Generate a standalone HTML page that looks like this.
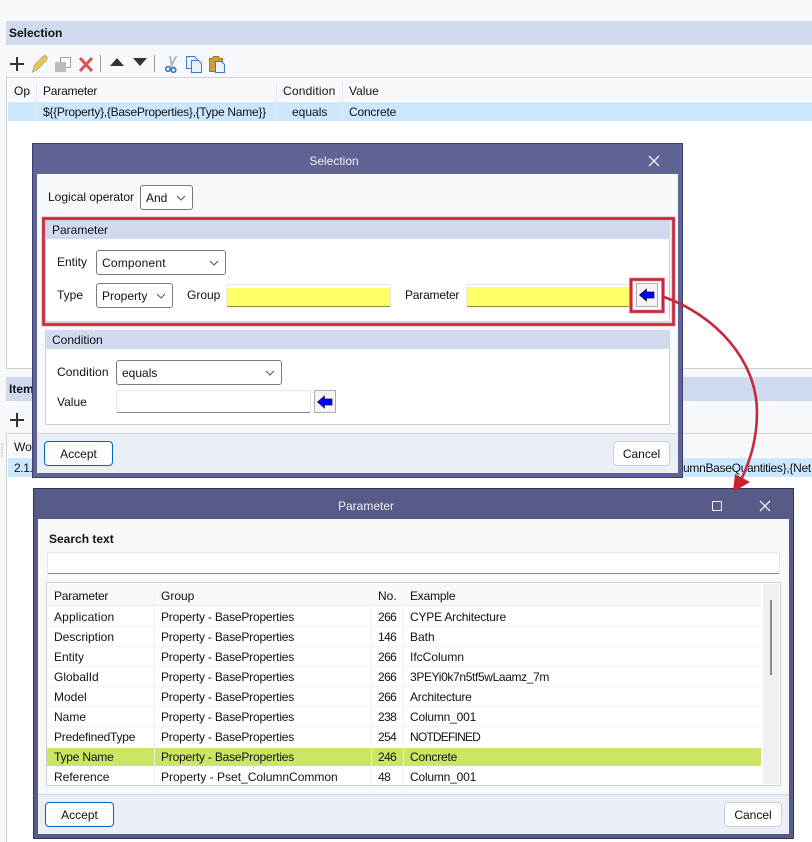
<!DOCTYPE html>
<html><head><meta charset="utf-8">
<style>
html,body{margin:0;padding:0}
body{width:812px;height:842px;overflow:hidden;position:relative;background:#f7f8fc;font-family:"Liberation Sans",sans-serif;font-size:12px;color:#111}
.b{position:absolute;box-sizing:border-box}
.t{position:absolute;white-space:nowrap;line-height:16px;height:16px}
.c{text-align:center}
.p{letter-spacing:-.2px}
.h{letter-spacing:-.2px}
.n{letter-spacing:-.6px}
.w{letter-spacing:.2px}
.sel{position:absolute;box-sizing:border-box;background:#fff;border:1px solid #7a7a7a;border-radius:3px;line-height:25px;padding-left:5px}
.sel svg{position:absolute;right:6px;top:9px}
.inp{position:absolute;box-sizing:border-box;background:#fff;border:1px solid #e6e6e6;border-bottom:1px solid #8a8a8a;border-radius:2px}
.btn{position:absolute;box-sizing:border-box;background:#fdfdfd;border:1px solid #d0d0d0;border-radius:4px;text-align:center;line-height:25px}
.acc{border:1px solid #0067c0}
.arr{position:absolute;box-sizing:border-box;background:#f5f5f5;border:1px solid #adadad}
.arr svg{position:absolute;left:2px;top:4px}
</style></head><body>

<!-- background main window -->
<div class="b" style="left:6px;top:21px;width:806px;height:24px;background:#cfdaef"></div>
<div class="t" style="left:9px;top:25px;font-weight:bold">Selection</div>

<svg class="b" style="left:0;top:45px" width="240" height="32" viewBox="0 45 240 32">
<path d="M17 57v14M10 64h14" stroke="#333" stroke-width="2" fill="none"/>
<path d="M32.500 72l2-7 9-9c1-1 3-.5 3.500 1s.5 2-.5 3l-9 9.500z" fill="#eec64e" stroke="#b9b08a" stroke-width="1"/>
<rect x="60.500" y="57.500" width="10" height="10" fill="#fff" stroke="#9a9a9a"/>
<rect x="55" y="62" width="11" height="10" fill="#bdbdbd"/>
<path d="M80 58l12 13M92 58l-12 13" stroke="#d9534f" stroke-width="3" fill="none"/>
<path d="M100.500 55v17M154.500 55v17" stroke="#9a9a9a" fill="none"/>
<path d="M117 58l7 8h-14z" fill="#333"/>
<path d="M133 58h14l-7 8z" fill="#333"/>
<path d="M176.500 56l-6 11M170 56l2 11" stroke="#9db0c6" stroke-width="1.600" fill="none"/>
<circle cx="168" cy="69" r="2.300" fill="none" stroke="#2f77bd" stroke-width="1.600"/>
<circle cx="173.500" cy="70" r="2.300" fill="none" stroke="#2f77bd" stroke-width="1.600"/>
<path d="M186.500 56.500h8l3 3v9h-11z" fill="#eaf2fb" stroke="#3a7bd0"/>
<path d="M191.500 60.500h7l3 3v9h-10z" fill="#eaf2fb" stroke="#3a7bd0"/>
<path d="M209.500 58.500h3l1-2h5l1 2h3v13h-13z" fill="#d39a44" stroke="#a8742a"/>
<path d="M215.500 61.500h6l3 3v8h-9z" fill="#eaf2fb" stroke="#3a7bd0"/>
</svg>

<div class="b" style="left:6px;top:77px;width:806px;height:292px;background:#fff;border:1px solid #d0d0d0;border-right:0"></div>
<div class="b" style="left:8px;top:79px;width:804px;height:22px;background:#f7f8fc"></div>
<div class="b" style="left:8px;top:102px;width:804px;height:19px;background:#cce8ff"></div>
<div class="b" style="left:36px;top:82px;width:1px;height:39px;background:#e6e9f0"></div>
<div class="b" style="left:276px;top:82px;width:1px;height:39px;background:#e6e9f0"></div>
<div class="b" style="left:342px;top:82px;width:1px;height:39px;background:#e6e9f0"></div>
<div class="t" style="left:14px;top:83px">Op</div>
<div class="t h" style="left:43px;top:83px">Parameter</div>
<div class="t w" style="left:283px;top:83px">Condition</div>
<div class="t" style="left:349px;top:83px">Value</div>
<div class="t" style="left:43px;top:104px;letter-spacing:-.27px">${{Property},{BaseProperties},{Type Name}}</div>
<div class="t" style="left:292px;top:104px">equals</div>
<div class="t h" style="left:349px;top:104px">Concrete</div>

<div class="b" style="left:6px;top:377px;width:806px;height:24px;background:#cfdaef"></div>
<div class="t" style="left:9px;top:381px;font-weight:bold">Item</div>
<svg class="b" style="left:0;top:401px" width="40" height="32"><path d="M17 12v14M10 19h14" stroke="#333" stroke-width="2" fill="none"/></svg>
<div class="b" style="left:6px;top:433px;width:806px;height:409px;background:#fff;border:1px solid #d0d0d0;border-right:0;border-bottom:0"></div>
<div class="b" style="left:8px;top:435px;width:804px;height:22px;background:#f7f8fc"></div>
<div class="b" style="left:8px;top:458px;width:804px;height:19px;background:#cce8ff"></div>
<div class="t" style="left:14px;top:439px">Wo</div>
<div class="t" style="left:14px;top:460px;letter-spacing:-.4px">2.1.</div>
<div class="t" style="left:683px;top:460px;width:129px;overflow:hidden;letter-spacing:-.3px">umnBaseQuantities},{Net</div>
<svg class="b" style="left:0;top:442px" width="5" height="16"><path d="M1 2h2M1 5h2M1 8h2M1 11h2M1 14h2" stroke="#b5b5b5" fill="none"/></svg>

<!-- Dialog 1 -->
<div class="b" style="left:32px;top:143px;width:651px;height:335px;background:#606494;border:1px solid #3b3d6e"></div>
<div class="b" style="left:37px;top:174px;width:641px;height:299px;background:#f7f8fc"></div>
<div class="t c" style="left:37px;top:153px;width:594px;color:#f0f0f5">Selection</div>
<svg class="b" style="left:648px;top:155px" width="12" height="12"><path d="M1 1l10 10M11 1l-10 10" stroke="#f2f2f6" stroke-width="1.300"/></svg>

<div class="t" style="left:48px;top:189px">Logical operator</div>
<div class="sel" style="left:140px;top:185px;width:53px;height:25px">And<svg width="10" height="6"><path d="M1 1l4 4 4-4" stroke="#555" fill="none"/></svg></div>

<!-- Parameter group -->
<div class="b" style="left:45px;top:219px;width:625px;height:103px;background:#fff;border:1px solid #d0d0d0"></div>
<div class="b" style="left:45px;top:220px;width:625px;height:19px;background:#cfdaef"></div>
<div class="t" style="left:52px;top:222px">Parameter</div>
<div class="t" style="left:57px;top:254px">Entity</div>
<div class="sel w" style="left:96px;top:250px;width:130px;height:25px">Component<svg width="10" height="6"><path d="M1 1l4 4 4-4" stroke="#555" fill="none"/></svg></div>
<div class="t" style="left:57px;top:287px">Type</div>
<div class="sel" style="left:96px;top:283px;width:77px;height:25px">Property<svg width="10" height="6"><path d="M1 1l4 4 4-4" stroke="#555" fill="none"/></svg></div>
<div class="t" style="left:187px;top:287px">Group</div>
<div class="inp" style="left:226px;top:284px;width:165px;height:23px;border-bottom:1px solid #8a8a3a;background:linear-gradient(#fff 0,#fff 3px,#ffff66 3px)"></div>
<div class="t h" style="left:405px;top:287px">Parameter</div>
<div class="inp" style="left:466px;top:284px;width:164px;height:23px;border-bottom:1px solid #8a8a3a;background:linear-gradient(#fff 0,#fff 2px,#ffff66 2px)"></div>
<div class="arr" style="left:636px;top:283px;width:22px;height:24px"><svg width="16" height="14"><path d="M.5 7L7.500 1V4H15V10H7.500V13Z" fill="#0000ff" stroke="#101040" stroke-width=".7"/></svg></div>

<!-- Condition group -->
<div class="b" style="left:45px;top:330px;width:625px;height:95px;background:#fff;border:1px solid #d0d0d0"></div>
<div class="b" style="left:45px;top:330px;width:625px;height:19px;background:#cfdaef"></div>
<div class="t" style="left:52px;top:332px">Condition</div>
<div class="t" style="left:57px;top:364px;letter-spacing:.1px">Condition</div>
<div class="sel" style="left:116px;top:360px;width:166px;height:25px">equals<svg width="10" height="6"><path d="M1 1l4 4 4-4" stroke="#555" fill="none"/></svg></div>
<div class="t" style="left:57px;top:394px">Value</div>
<div class="inp" style="left:116px;top:390px;width:195px;height:23px"></div>
<div class="arr" style="left:314px;top:390px;width:22px;height:23px"><svg width="16" height="14"><path d="M.5 7L7.500 1V4H15V10H7.500V13Z" fill="#0000ff" stroke="#101040" stroke-width=".7"/></svg></div>

<!-- Footer -->
<div class="b" style="left:37px;top:433px;width:641px;height:40px;background:#e9eef7;border-top:1px solid #d5d5d5"></div>
<div class="btn acc" style="left:44px;top:441px;width:69px;height:25px">Accept</div>
<div class="btn" style="left:613px;top:441px;width:57px;height:25px">Cancel</div>

<!-- Dialog 2 -->
<div class="b" style="left:33px;top:488px;width:761px;height:351px;background:#585a87;border:1px solid #2f3160"></div>
<div class="b" style="left:38px;top:519px;width:751px;height:315px;background:#f7f8fc"></div>
<div class="t c" style="left:38px;top:498px;width:656px;color:#f0f0f5">Parameter</div>
<div class="b" style="left:712px;top:501px;width:10px;height:10px;border:1px solid #f2f2f6"></div>
<svg class="b" style="left:759px;top:500px" width="12" height="12"><path d="M1 1l10 10M11 1l-10 10" stroke="#f2f2f6" stroke-width="1.300"/></svg>
<div class="t" style="left:49px;top:531px;font-weight:bold">Search text</div>
<div class="inp" style="left:47px;top:552px;width:733px;height:22px"></div>

<div class="b" style="left:46px;top:582px;width:735px;height:204px;background:#fff;border:1px solid #cfcfcf"></div>
<div class="b" style="left:48px;top:584px;width:713px;height:22px;background:#f7f8fc;border-bottom:1px solid #e8e8e8"></div>
<div class="b" style="left:763px;top:584px;width:16px;height:200px;background:#f0f0f0"></div>
<div class="b" style="left:770px;top:600px;width:2px;height:75px;background:#8a8a8a"></div>

<div class="b" style="left:48px;top:626px;width:713px;height:1px;background:#f3f4f6"></div>
<div class="b" style="left:48px;top:646px;width:713px;height:1px;background:#f3f4f6"></div>
<div class="b" style="left:48px;top:666px;width:713px;height:1px;background:#f3f4f6"></div>
<div class="b" style="left:48px;top:686px;width:713px;height:1px;background:#f3f4f6"></div>
<div class="b" style="left:48px;top:706px;width:713px;height:1px;background:#f3f4f6"></div>
<div class="b" style="left:48px;top:726px;width:713px;height:1px;background:#f3f4f6"></div>
<div class="b" style="left:47px;top:748px;width:714px;height:18px;background:#cbe665"></div>
<div class="b" style="left:154px;top:587px;width:1px;height:198px;background:#f0f2f5"></div>
<div class="b" style="left:371px;top:587px;width:1px;height:198px;background:#f0f2f5"></div>
<div class="b" style="left:403px;top:587px;width:1px;height:198px;background:#f0f2f5"></div>

<div class="t h" style="left:54px;top:588px">Parameter</div><div class="t" style="left:161px;top:588px">Group</div><div class="t" style="left:378px;top:588px">No.</div><div class="t h" style="left:410px;top:588px">Example</div>
<div class="t" style="left:54px;top:609px;letter-spacing:.15px">Application</div><div class="t p" style="left:161px;top:609px">Property - BaseProperties</div><div class="t n" style="left:378px;top:609px">266</div><div class="t p" style="left:410px;top:609px">CYPE Architecture</div>
<div class="t" style="left:54px;top:629px">Description</div><div class="t p" style="left:161px;top:629px">Property - BaseProperties</div><div class="t n" style="left:378px;top:629px">146</div><div class="t" style="left:410px;top:629px">Bath</div>
<div class="t" style="left:54px;top:649px">Entity</div><div class="t p" style="left:161px;top:649px">Property - BaseProperties</div><div class="t n" style="left:378px;top:649px">266</div><div class="t" style="left:410px;top:649px">IfcColumn</div>
<div class="t" style="left:54px;top:669px">GlobalId</div><div class="t p" style="left:161px;top:669px">Property - BaseProperties</div><div class="t n" style="left:378px;top:669px">266</div><div class="t" style="left:410px;top:669px;letter-spacing:-.36px">3PEYi0k7n5tf5wLaamz_7m</div>
<div class="t" style="left:54px;top:689px">Model</div><div class="t p" style="left:161px;top:689px">Property - BaseProperties</div><div class="t n" style="left:378px;top:689px">266</div><div class="t h" style="left:410px;top:689px">Architecture</div>
<div class="t" style="left:54px;top:709px">Name</div><div class="t p" style="left:161px;top:709px">Property - BaseProperties</div><div class="t n" style="left:378px;top:709px">238</div><div class="t h" style="left:410px;top:709px">Column_001</div>
<div class="t h" style="left:54px;top:729px">PredefinedType</div><div class="t p" style="left:161px;top:729px">Property - BaseProperties</div><div class="t n" style="left:378px;top:729px">254</div><div class="t" style="left:410px;top:729px;letter-spacing:-.8px">NOTDEFINED</div>
<div class="t h" style="left:54px;top:749px">Type Name</div><div class="t p" style="left:161px;top:749px">Property - BaseProperties</div><div class="t n" style="left:378px;top:749px">246</div><div class="t h" style="left:410px;top:749px">Concrete</div>
<div class="t" style="left:54px;top:769px">Reference</div><div class="t" style="left:161px;top:769px">Property - Pset_ColumnCommon</div><div class="t n" style="left:378px;top:769px">48</div><div class="t h" style="left:410px;top:769px">Column_001</div>

<div class="b" style="left:38px;top:794px;width:751px;height:40px;background:#e9eef7;border-top:1px solid #d5d5d5"></div>
<div class="btn acc" style="left:45px;top:802px;width:69px;height:25px">Accept</div>
<div class="btn" style="left:724px;top:802px;width:58px;height:25px">Cancel</div>

<!-- Red annotations -->
<svg class="b" style="left:0;top:0;pointer-events:none" width="812" height="842">
<rect x="43.500" y="218.500" width="630" height="106" fill="none" stroke="#e9a9b1" stroke-width="4"/>
<rect x="631" y="279.500" width="32" height="32" fill="none" stroke="#e9a9b1" stroke-width="4"/>
<rect x="43.500" y="218.500" width="630" height="106" fill="none" stroke="#c8283c" stroke-width="2.600"/>
<rect x="631" y="279.500" width="32" height="32" fill="none" stroke="#c8283c" stroke-width="2.600"/>
<path d="M664 297C715 315 757 360 757 412C757 438 751 458 742 478" fill="none" stroke="#c8283c" stroke-width="2.600"/>
<path d="M733 492L735 474L750 482Z" fill="#c8202f"/>
</svg>
</body></html>
